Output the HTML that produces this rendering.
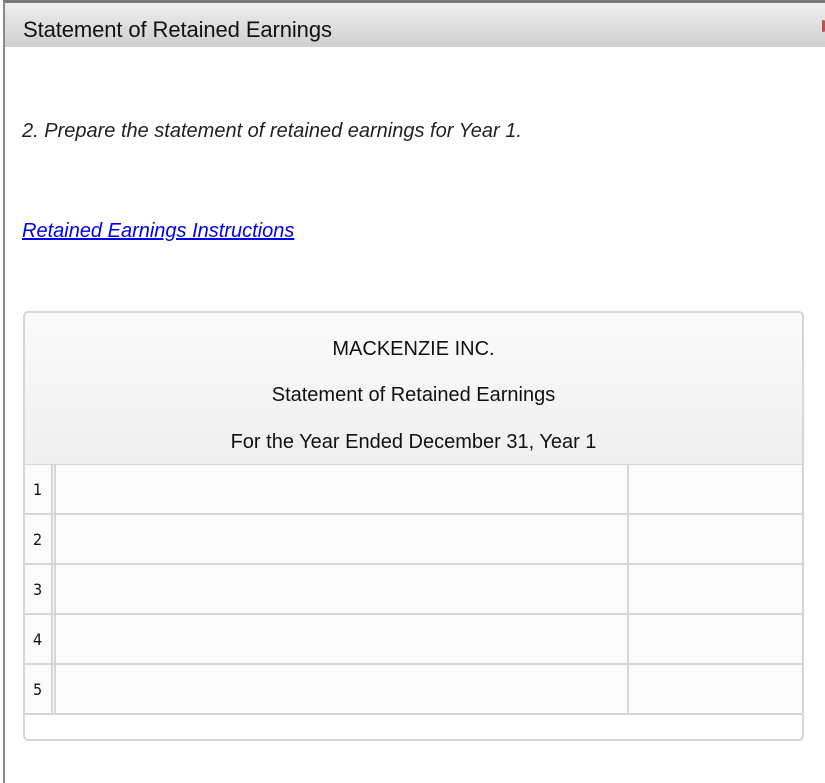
<!DOCTYPE html>
<html><head><meta charset="utf-8"><style>
body{margin:0;width:825px;height:765px;overflow:hidden;background:#fff;font-family:"Liberation Sans",Arial,sans-serif;}
.frame{position:absolute;left:3px;top:0;width:830px;height:780px;border-left:2px solid #8a8a8a;border-top:3px solid #7a7a7a;}
.hdr{position:absolute;left:5px;top:3px;width:820px;height:44px;background:linear-gradient(#efefef,#cfcfcf);}
.hdr span{position:absolute;left:18px;top:14px;font-size:22px;color:#111;letter-spacing:-0.1px}
.red{position:absolute;left:822px;top:20px;width:3px;height:12px;background:#c0504d;border-radius:2px}
.q{position:absolute;left:22px;top:120px;font-size:20px;font-style:italic;color:#222}
.lnk{position:absolute;left:22px;top:220px;font-size:20px;font-style:italic;color:#0000ee;text-decoration:underline}
.box{position:absolute;left:23px;top:311px;width:777px;height:426px;border:2px solid #d6d6d6;border-radius:5px;background:#fff;overflow:hidden}
.th{position:absolute;left:0;top:0;width:777px;height:151px;background:linear-gradient(#fbfbfb,#efefef);border-bottom:2px solid #d6d6d6}
.t{position:absolute;width:777px;text-align:center;font-size:20px;color:#111}
.row{position:absolute;left:0;width:777px;height:48px;border-bottom:2px solid #d6d6d6;background:#fbfbfb}
.n{position:absolute;left:0;width:26px;height:48px;border-right:2px solid #d6d6d6}
.n span{position:absolute;left:8px;top:15px;font-family:"DejaVu Sans Condensed","DejaVu Sans",sans-serif;font-size:16px;color:#111}
.v1{position:absolute;left:29px;top:0;width:2px;height:48px;background:#d6d6d6}
.v2{position:absolute;left:602px;top:0;width:2px;height:48px;background:#d6d6d6}
</style></head><body>
<div class="frame"></div>
<div class="hdr"><span>Statement of Retained Earnings</span></div>
<div class="red"></div>
<div class="q">2. Prepare the statement of retained earnings for Year 1.</div>
<div class="lnk">Retained Earnings Instructions</div>
<div class="box">
<div class="th">
<div class="t" style="top:25px">MACKENZIE INC.</div>
<div class="t" style="top:71px">Statement of Retained Earnings</div>
<div class="t" style="top:118px">For the Year Ended December 31, Year 1</div>
</div>
<div class="row" style="top:152px"><div class="n"><span>1</span></div><div class="v1"></div><div class="v2"></div></div>
<div class="row" style="top:202px"><div class="n"><span>2</span></div><div class="v1"></div><div class="v2"></div></div>
<div class="row" style="top:252px"><div class="n"><span>3</span></div><div class="v1"></div><div class="v2"></div></div>
<div class="row" style="top:302px"><div class="n"><span>4</span></div><div class="v1"></div><div class="v2"></div></div>
<div class="row" style="top:352px"><div class="n"><span>5</span></div><div class="v1"></div><div class="v2"></div></div>
</div>
</body></html>
